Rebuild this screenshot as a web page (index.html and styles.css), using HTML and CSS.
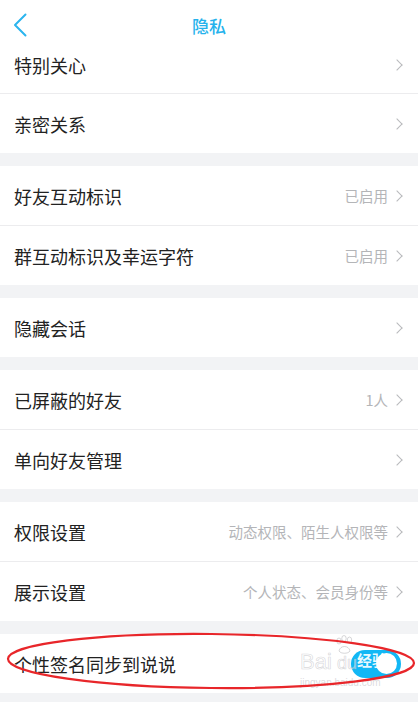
FILE: index.html
```html
<!DOCTYPE html>
<html lang="zh-CN">
<head>
    <meta charset="UTF-8">
    <meta name="viewport" content="width=device-width, initial-scale=1.0">
    <title>隐私</title>
    <link rel="stylesheet" href="styles.css">
</head>
<body>
    <header class="nav">
        <button class="back" aria-label="返回">
            <svg width="14" height="24" viewBox="0 0 14 24"><path d="M12.5 1.5 L2 12 L12.5 22.5" fill="none" stroke="#2bb5ee" stroke-width="2" stroke-linecap="round" stroke-linejoin="round"/></svg>
        </button>
        <h1 class="title">隐私</h1>
    </header>

    <main class="list">
        <section class="group">
            <div class="row row-cut"><span class="label">特别关心</span><span class="extra"><i class="chev"></i></span></div>
            <div class="row"><span class="label">亲密关系</span><span class="extra"><i class="chev"></i></span></div>
        </section>

        <section class="group">
            <div class="row"><span class="label">好友互动标识</span><span class="extra">已启用<i class="chev"></i></span></div>
            <div class="row"><span class="label">群互动标识及幸运字符</span><span class="extra">已启用<i class="chev"></i></span></div>
        </section>

        <section class="group">
            <div class="row"><span class="label">隐藏会话</span><span class="extra"><i class="chev"></i></span></div>
        </section>

        <section class="group">
            <div class="row"><span class="label">已屏蔽的好友</span><span class="extra">1人<i class="chev"></i></span></div>
            <div class="row"><span class="label">单向好友管理</span><span class="extra"><i class="chev"></i></span></div>
        </section>

        <section class="group">
            <div class="row"><span class="label">权限设置</span><span class="extra">动态权限、陌生人权限等<i class="chev"></i></span></div>
            <div class="row"><span class="label">展示设置</span><span class="extra">个人状态、会员身份等<i class="chev"></i></span></div>
        </section>

        <section class="group">
            <div class="row row-marked">
                <span class="label">个性签名同步到说说</span>
                <span class="switch on"><span class="knob"></span></span>
                <span class="wm wm-bai">Bai</span>
                <span class="wm wm-du">du</span>
                <svg class="wm-paw" width="22" height="20" viewBox="0 0 22 20">
                    <g fill="none" stroke="rgba(175,175,180,0.5)" stroke-width="1">
                        <ellipse cx="5" cy="6" rx="2.2" ry="3"/>
                        <ellipse cx="10" cy="3.5" rx="2.2" ry="3"/>
                        <ellipse cx="15.5" cy="5" rx="2.2" ry="3"/>
                        <path d="M5 16 C6 10 15 10 16 16 C14 19 7 19 5 16 Z"/>
                    </g>
                </svg>
                <span class="wm-jy">经验</span>
                <span class="wm-url">jingyan.baidu.com</span>
                <svg class="ring" width="418" height="64" viewBox="0 0 418 64">
                    <ellipse cx="211" cy="30" rx="203" ry="27" fill="none" stroke="#e8262a" stroke-width="2.2" transform="rotate(0.6 211 30)"/>
                </svg>
            </div>
        </section>
    </main>
</body>
</html>
```

FILE: styles.css
```css
* {
    box-sizing: border-box;
}

body {
    margin: 0;
    font-family: "Noto Sans CJK SC", "Noto Sans", sans-serif;
    background-color: #f2f3f5;
    color: #222;
    height: 702px;
    overflow: hidden;
}

.nav {
    height: 44px;
    background: white;
    display: flex;
    align-items: center;
    justify-content: center;
    position: relative;
}

.back {
    position: absolute;
    left: 13px;
    top: 13px;
    padding: 0;
    border: none;
    background: none;
    display: flex;
}

.title {
    margin: 0;
    font-size: 17px;
    font-weight: 500;
    color: #25b2ec;
    margin-top: 6px;
}

.group {
    background: white;
    margin-bottom: 13px;
}

.row {
    height: 60px;
    padding: 0 15px 0 14px;
    display: flex;
    align-items: center;
    justify-content: space-between;
    border-bottom: 1px solid #ececee;
}

.row:last-child {
    height: 59px;
    border-bottom: none;
}

.row-cut {
    height: 50px;
    padding-bottom: 7px;
}

.label {
    font-size: 18px;
    color: #222;
}

.extra {
    display: flex;
    align-items: center;
    font-size: 14.5px;
    color: #b4b5b8;
}

.chev {
    width: 8px;
    height: 8px;
    border-top: 1.6px solid #b8b9bc;
    border-right: 1.6px solid #b8b9bc;
    transform: rotate(45deg);
    margin-left: 5px;
    margin-right: 2px;
}

.row-marked {
    position: relative;
}

.switch {
    width: 50px;
    height: 28px;
    border-radius: 14px;
    background: #12b7f5;
    display: flex;
    align-items: center;
    justify-content: flex-end;
    padding: 0 4px;
    margin-right: 2px;
}

.knob {
    width: 21px;
    height: 21px;
    border-radius: 50%;
    background: white;
}

.ring {
    position: absolute;
    left: 0;
    top: -3px;
    pointer-events: none;
}

/* baidu watermark over the switch row */
.wm {
    position: absolute;
    top: 17px;
    font-family: "Liberation Sans", sans-serif;
    font-size: 22px;
    line-height: 1;
    color: rgba(255, 255, 255, 0.5);
    -webkit-text-stroke: 0.7px rgba(170, 170, 175, 0.45);
}

.wm-bai {
    left: 300px;
}

.wm-du {
    left: 337px;
    top: 20px;
    font-size: 18px;
}

.wm-paw {
    position: absolute;
    left: 334px;
    top: 1px;
}

.wm-jy {
    position: absolute;
    left: 357px;
    top: 18px;
    font-size: 15px;
    line-height: 1;
    font-weight: bold;
    color: rgba(255, 255, 255, 0.92);
}

.wm-url {
    position: absolute;
    left: 300px;
    top: 44px;
    font-family: "Liberation Sans", sans-serif;
    font-size: 10px;
    line-height: 1;
    color: rgba(190, 190, 195, 0.55);
}
```
